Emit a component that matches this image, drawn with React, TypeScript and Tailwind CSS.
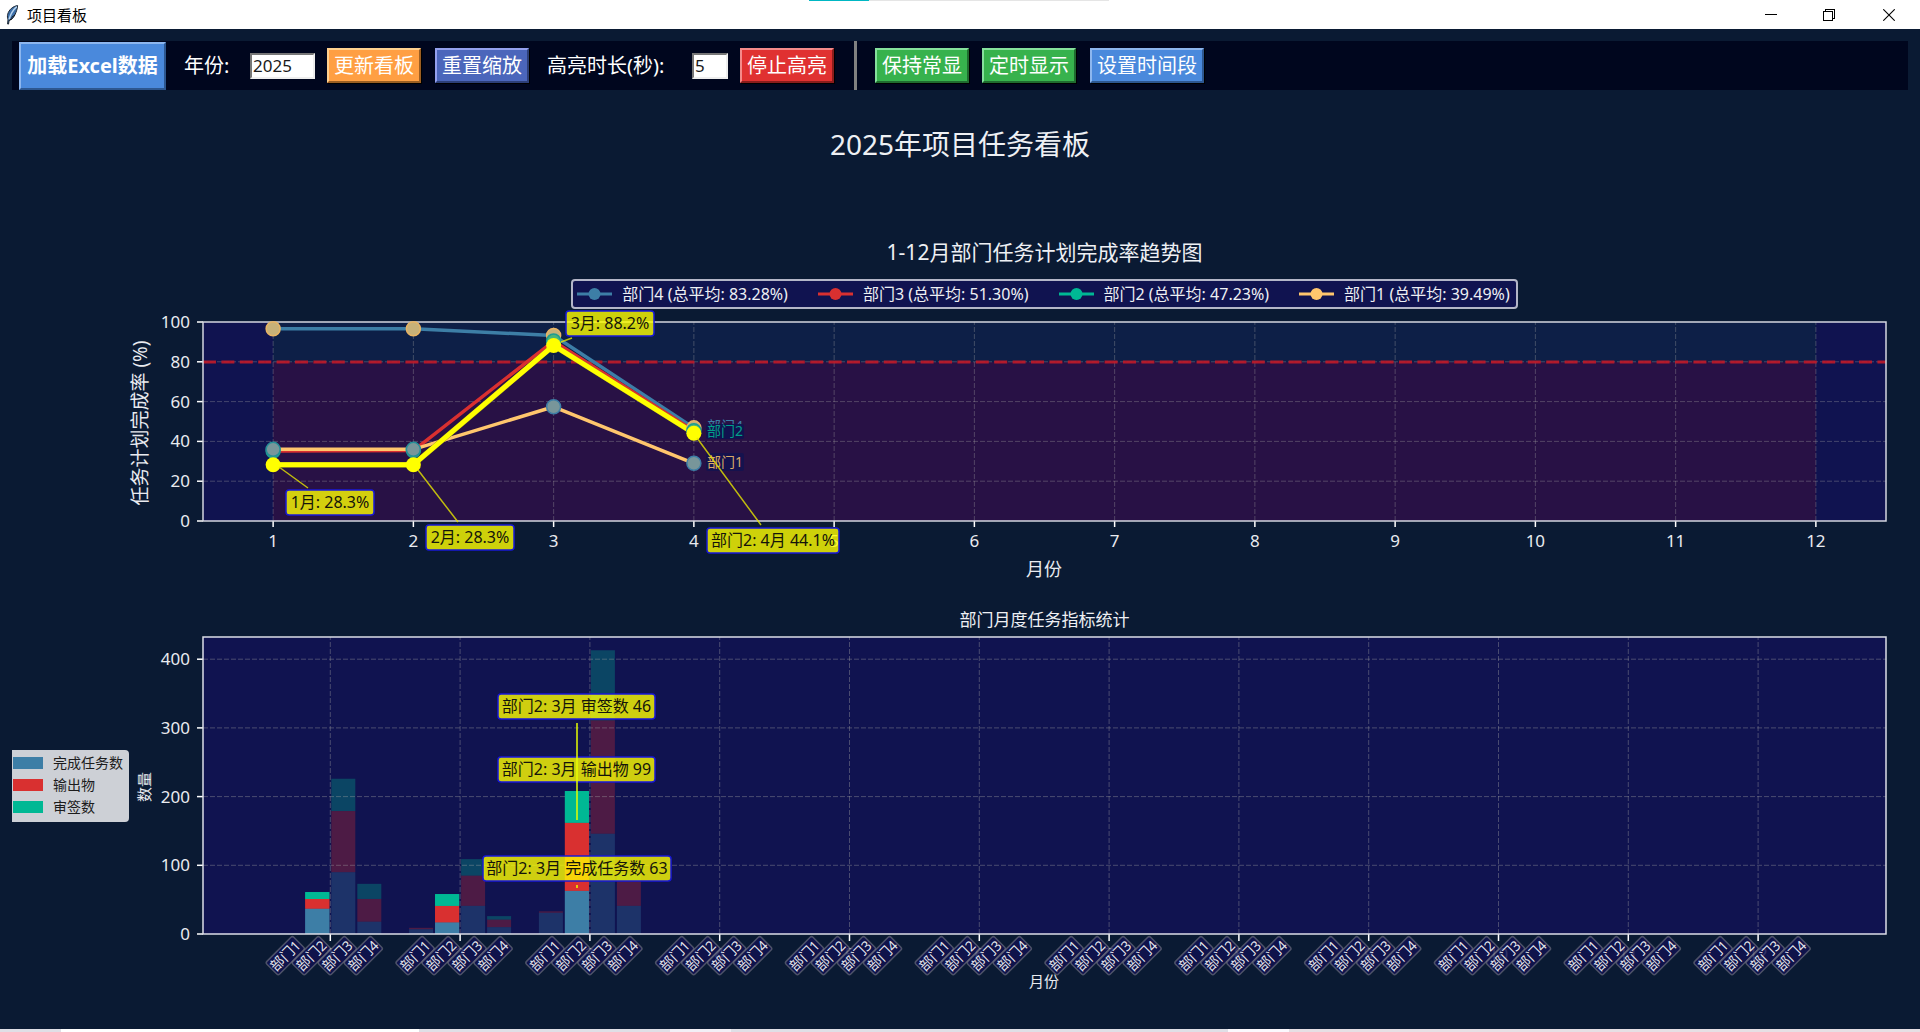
import { useState } from "react";

const PLOT_LEFT = 203;
const PLOT_RIGHT = 1886;
const MONTHS = [1, 2, 3, 4, 5, 6, 7, 8, 9, 10, 11, 12];

const BLUE = "#3d7ea6";
const RED = "#d93030";
const GREEN = "#00b894";
const SAND = "#ffc66d";

/* ---------- window chrome ---------- */

function Feather() {
  return (
    <svg width="14" height="20" viewBox="0 0 14 20" aria-hidden="true">
      <path d="M12.6 0.6C8 1.2 4 4.6 2.7 9.2c-.5 2-.3 4 .3 5.6l-.4 4.2.9.1.6-3.6c2.6-.8 4.6-3 5.8-5.6 1.400-3.100 2.500-6 2.700-9.300z" fill="#3b6ea8" stroke="#1d2733" strokeWidth="1" />
      <path d="M11.8 1.600C8.500 4.500 5.500 9 4 14.500" stroke="#b8d4ee" strokeWidth="1.400" fill="none" />
      <path d="M6.500 12.500l3.500-2.500M4.500 15l3-1.500" stroke="#111" strokeWidth="1" />
    </svg>
  );
}

function TitleBar() {
  return (
    <header className="relative flex h-[29px] items-center bg-white pl-[5px] text-black">
      <div className="absolute left-[809px] top-0 flex h-px w-[300px] bg-[#e5e5e5]">
        <div className="h-px w-[60px] bg-[#00b7c3]" />
      </div>
      <Feather />
      <span className="ml-2 text-[15px] leading-5">项目看板</span>
      <div className="ml-auto flex items-center">
        <button aria-label="最小化" className="flex h-7 w-[58px] items-center justify-center">
          <svg width="12" height="12" viewBox="0 0 12 12" shapeRendering="crispEdges"><path d="M0 5.500h12" stroke="#000" /></svg>
        </button>
        <button aria-label="还原" className="flex h-7 w-[58px] items-center justify-center">
          <svg width="12" height="12" viewBox="0 0 12 12" fill="none" stroke="#000" shapeRendering="crispEdges">
            <path d="M.5 2.500h9v9h-9z" />
            <path d="M2.500 2.500v-2h9v9h-2" />
          </svg>
        </button>
        <button aria-label="关闭" className="flex h-7 w-[62px] items-center justify-center">
          <svg width="12" height="12" viewBox="0 0 12 12" stroke="#000"><path d="M.3.3l11.400 11.400M11.700.3L.3 11.700" strokeWidth="1.100" /></svg>
        </button>
      </div>
    </header>
  );
}

/* ---------- toolbar ---------- */

const raised = "border-2 text-xl text-white leading-none whitespace-nowrap h-[35px] px-[5px] shadow-[1px_1px_0_#000]";

function Toolbar() {
  const [year, setYear] = useState("2025");
  const [secs, setSecs] = useState("5");
  return (
    <div className="mx-3 mt-3 flex h-[49px] items-center bg-[#00061e] pl-[7px] text-xl text-white">
      <button className="h-12 w-[147px] whitespace-nowrap border-2 border-t-[#8db6ee] border-l-[#8db6ee] border-b-[#2d5790] border-r-[#2d5790] bg-[#4a89dc] text-xl font-bold leading-none">
        加载Excel数据
      </button>
      <label htmlFor="year" className="ml-[18px] w-[66px]">年份:</label>
      <input id="year" value={year} onChange={(e) => setYear(e.target.value)} className="h-[26px] w-[65px] border-2 border-t-[#777] border-l-[#777] border-b-[#eee] border-r-[#eee] bg-white pl-px text-[17px] leading-none text-[#1a1a1a]" />
      <button className={raised + " ml-3 border-t-[#ffd08f] border-l-[#ffd08f] border-b-[#9c5e22] border-r-[#9c5e22] bg-[#ff9f43]"}>更新看板</button>
      <button className={raised + " ml-[14px] border-t-[#94a0ee] border-l-[#94a0ee] border-b-[#2d3f78] border-r-[#2d3f78] bg-[#4b66bb]"}>重置缩放</button>
      <label htmlFor="secs" className="ml-[18px] w-[145px]">高亮时长(秒):</label>
      <input id="secs" value={secs} onChange={(e) => setSecs(e.target.value)} className="h-[26px] w-9 border-2 border-t-[#777] border-l-[#777] border-b-[#eee] border-r-[#eee] bg-white pl-px text-[17px] leading-none text-[#1a1a1a]" />
      <button className={raised + " ml-3 border-t-[#f58a8a] border-l-[#f58a8a] border-b-[#8a1c1c] border-r-[#8a1c1c] bg-[#e03131]"}>停止高亮</button>
      <div className="ml-5 h-full w-[3px] bg-[#808080]" />
      <button className={raised + " ml-[18px] border-t-[#85e09c] border-l-[#85e09c] border-b-[#1f6b30] border-r-[#1f6b30] bg-[#37b24d]"}>保持常显</button>
      <button className={raised + " ml-[13px] border-t-[#85e09c] border-l-[#85e09c] border-b-[#1f6b30] border-r-[#1f6b30] bg-[#37b24d]"}>定时显示</button>
      <button className={raised + " ml-[14px] border-t-[#8db6ee] border-l-[#8db6ee] border-b-[#2d5790] border-r-[#2d5790] bg-[#4a89dc]"}>设置时间段</button>
    </div>
  );
}

/* ---------- shared chart pieces ---------- */

function Note({ x, y, w, children }: { x: number; y: number; w: number; children: string }) {
  return (
    <g>
      <rect x={x} y={y} width={w} height={25} rx={3} fill="#ffff00" fillOpacity={0.8} stroke="#1818d8" strokeWidth={1.500} />
      <text x={x + w / 2} y={y + 18} textAnchor="middle" fontSize={16} fill="#14140a">{children}</text>
    </g>
  );
}

/* ---------- completion rate chart ---------- */

const mx = (m: number) => PLOT_LEFT + (m - 0.5) * ((PLOT_RIGHT - PLOT_LEFT) / 12);
const ry = (v: number) => 521 - v * 1.99;
const pts = (vals: number[]) => vals.map((v, i) => `${mx(i + 1)},${ry(v)}`).join(" ");

const RATE = {
  d4: [96.6, 96.6, 93.2, 46.8],
  d3: [35.2, 35.4, 90.4, 45.400],
  d2: [28.3, 28.3, 88.2, 44.1],
  d1: [36, 36, 57.4, 29],
};

const LEGEND = [
  { name: "部门4", avg: "83.28%", color: BLUE },
  { name: "部门3", avg: "51.30%", color: RED },
  { name: "部门2", avg: "47.23%", color: GREEN },
  { name: "部门1", avg: "39.49%", color: SAND },
];

function RateChart() {
  return (
    <svg viewBox="0 312 1920 277" className="mt-[3px] block w-full overflow-visible" role="img" aria-label="部门任务计划完成率趋势图">
      <rect x={PLOT_LEFT} y={322} width={PLOT_RIGHT - PLOT_LEFT} height={199} fill="#101350" />
      <rect x={mx(1)} y={322} width={mx(12) - mx(1)} height={40} fill="#0d1f47" />
      <rect x={mx(1)} y={362} width={mx(12) - mx(1)} height={159} fill="#281145" />
      <g stroke="#a0a0a0" strokeOpacity={0.36} strokeDasharray="5 2">
        {MONTHS.map((m) => <line key={m} x1={mx(m)} x2={mx(m)} y1={521} y2={322} />)}
        {[20, 40, 60, 80].map((v) => <line key={v} x1={PLOT_LEFT} x2={PLOT_RIGHT} y1={ry(v)} y2={ry(v)} />)}
      </g>
      <line x1={PLOT_LEFT} x2={PLOT_RIGHT} y1={362} y2={362} stroke="#c01a28" strokeOpacity={0.9} strokeWidth={3} strokeDasharray="13 5.400" />

      <g stroke="#fff" strokeWidth={1.500}>
        {MONTHS.map((m) => <line key={m} x1={mx(m)} x2={mx(m)} y1={521} y2={527} />)}
        {[0, 20, 40, 60, 80, 100].map((v) => <line key={v} x1={197} x2={PLOT_LEFT} y1={ry(v)} y2={ry(v)} />)}
        <rect x={PLOT_LEFT} y={322} width={PLOT_RIGHT - PLOT_LEFT} height={199} fill="none" stroke="#d4d6e0" />
      </g>
      <g fill="#e9ebf0" fontSize={17}>
        {MONTHS.map((m) => <text key={m} x={mx(m)} y={547} textAnchor="middle">{m}</text>)}
        {[0, 20, 40, 60, 80, 100].map((v) => <text key={v} x={190} y={ry(v) + 6} textAnchor="end">{v}</text>)}
        <text x={1044} y={576} textAnchor="middle" fontSize={18}>月份</text>
        <text transform="translate(147 423) rotate(-90)" textAnchor="middle" fontSize={19}>任务计划完成率 (%)</text>
      </g>

      <g fill="none" strokeWidth={3.500} strokeLinejoin="round">
        <polyline points={pts(RATE.d4)} stroke={BLUE} />
        <polyline points={pts(RATE.d3)} stroke={RED} />
        <polyline points={pts(RATE.d1)} stroke={SAND} />
        <polyline points={pts(RATE.d2)} stroke="#8a8a20" strokeWidth={5.500} />
        <polyline points={pts(RATE.d2)} stroke="#ffff00" strokeWidth={5} />
      </g>
      {RATE.d4.map((v, i) => <circle key={i} cx={mx(i + 1)} cy={ry(v)} r={7} fill="#c8b178" stroke="#e8b464" strokeWidth={1.500} />)}
      {RATE.d3.map((v, i) => <circle key={i} cx={mx(i + 1)} cy={ry(v)} r={7} fill="#4cb47a" stroke="#1c9c90" strokeWidth={1.500} />)}
      {RATE.d1.map((v, i) => <circle key={i} cx={mx(i + 1)} cy={ry(v)} r={7} fill="#78969a" stroke={i < 2 ? "#258e98" : "#3d7ea6"} strokeWidth={1.500} />)}
      {RATE.d2.map((v, i) => <circle key={i} cx={mx(i + 1)} cy={ry(v)} r={7.500} fill="#ffff00" />)}

      <g fontSize={14}>
        <text x={707} y={431} fill={BLUE}>部门4</text>
        <rect x={706} y={424} width={38} height={15} rx={2} fill="#101350" fillOpacity={0.95} />
        <text x={707} y={436} fill={GREEN} fillOpacity={0.85}>部门2</text>
        <rect x={706} y={453} width={38} height={18} rx={2} fill="#101350" fillOpacity={0.8} />
        <text x={707} y={467} fill={SAND} fillOpacity={0.85}>部门1</text>
      </g>

      <g stroke="#e6e600" strokeOpacity={0.8} strokeWidth={1.500}>
        <path d="M279 467L308 488M418 470L458 522M561 342L572 338M697 438L761 525" fill="none" />
      </g>
      <Note x={286} y={490} w={88}>1月: 28.3%</Note>
      <Note x={426} y={525} w={88}>2月: 28.3%</Note>
      <Note x={566} y={311} w={88}>3月: 88.2%</Note>
      <Note x={707} y={528} w={132}>部门2: 4月 44.1%</Note>
    </svg>
  );
}

/* ---------- stacked bar chart ---------- */

const tx = (m: number) => 330.3 + (m - 1) * 129.8;
const cy = (v: number) => 934 - v * 0.687;

/* month -> department -> [finished, outputs, signed] */
const BARS = [
  [[1, 0, 0], [37, 14, 10], [90, 89, 47], [18, 33, 22]],
  [[7, 2, 0], [17, 24, 17], [41, 44, 24], [10, 11, 5]],
  [[31, 2, 0], [63, 99, 46], [146, 165, 102], [41, 37, 10]],
];
const STACK = [BLUE, RED, GREEN];

function CountChart() {
  return (
    <svg viewBox="132 630 1788 365" className="block min-w-0 flex-1 overflow-visible" role="img" aria-label="部门月度任务指标统计">
      <rect x={PLOT_LEFT} y={637} width={PLOT_RIGHT - PLOT_LEFT} height={297} fill="#101350" />
      {BARS.map((depts, m) =>
        depts.map((vals, d) => {
          let base = 0;
          return vals.map((v, s) => {
            base += v;
            return (
              <rect key={`${m}-${d}-${s}`} x={tx(m + 1) - 51 + d * 26} y={cy(base)} width={24} height={v * 0.687} fill={STACK[s]} fillOpacity={d === 1 ? 1 : 0.3} />
            );
          });
        })
      )}
      <g stroke="#a0a0a0" strokeOpacity={0.4} strokeDasharray="5 2">
        {MONTHS.map((m) => <line key={m} x1={tx(m)} x2={tx(m)} y1={934} y2={637} />)}
        {[100, 200, 300, 400].map((v) => <line key={v} x1={PLOT_LEFT} x2={PLOT_RIGHT} y1={cy(v)} y2={cy(v)} />)}
      </g>
      {/* highlighted department stays above the grid */}
      {BARS.map((depts, m) => {
        let base = 0;
        return depts[1].map((v, s) => {
          base += v;
          return <rect key={`${m}-${s}`} x={tx(m + 1) - 25} y={cy(base)} width={24} height={v * 0.687} fill={STACK[s]} />;
        });
      })}
      <g stroke="#fff" strokeWidth={1.500}>
        {MONTHS.map((m) => <line key={m} x1={tx(m)} x2={tx(m)} y1={934} y2={941} />)}
        {[0, 100, 200, 300, 400].map((v) => <line key={v} x1={197} x2={PLOT_LEFT} y1={cy(v)} y2={cy(v)} />)}
        <rect x={PLOT_LEFT} y={637} width={PLOT_RIGHT - PLOT_LEFT} height={297} fill="none" stroke="#dcdee8" />
      </g>
      <g fill="#e9ebf0" fontSize={17}>
        {[0, 100, 200, 300, 400].map((v) => <text key={v} x={190} y={cy(v) + 6} textAnchor="end">{v}</text>)}
        {MONTHS.map((m) => <text key={m} x={tx(m)} y={960} textAnchor="middle">{m}</text>)}
        <text x={1044} y={987} textAnchor="middle" fontSize={15}>月份</text>
        <text transform="translate(150 787) rotate(-90)" textAnchor="middle" fontSize={15}>数量</text>
      </g>
      {MONTHS.map((m) =>
        [1, 2, 3, 4].map((d) => (
          <g key={`${m}-${d}`} transform={`translate(${tx(m) - 71 + d * 26} 955.700) rotate(-45)`} fillOpacity={0.85}>
            <rect x={-19} y={-9} width={38} height={18} rx={2} fill="#101350" stroke="#84848c" strokeOpacity={0.55} strokeWidth={1.500} />
            <text y={5} textAnchor="middle" fontSize={14} fill="#fff" fillOpacity={0.9}>{`部门${d}`}</text>
          </g>
        ))
      )}
      <Note x={498} y={694} w={157}>部门2: 3月 审签数 46</Note>
      <Note x={498} y={757} w={157}>部门2: 3月 输出物 99</Note>
      <Note x={483} y={856} w={188}>部门2: 3月 完成任务数 63</Note>
      <path d="M577 723V820M577 885V888" stroke="#e6ff00" strokeOpacity={0.75} strokeWidth={2} fill="none" />
    </svg>
  );
}

export default function App() {
  return (
    <div className="flex min-h-screen flex-col bg-[#0a1a33] font-['Noto_Sans','Noto_Sans_CJK_SC',sans-serif] text-[#eef0f4]">
      <TitleBar />
      <main className="flex-1">
        <Toolbar />
        <h1 className="mt-[34px] text-center text-[28px] leading-10">2025年项目任务看板</h1>

        <section className="mt-[73px]">
          <div className="flex flex-col items-center pl-[169px]">
            <h2 className="text-[21px] leading-[30px]">1-12月部门任务计划完成率趋势图</h2>
            <ul className="mt-3 flex h-[30px] items-center gap-[30px] rounded border-2 border-[#b4b6c8] bg-[#101350] pl-1 pr-[6px]">
              {LEGEND.map((l) => (
                <li key={l.name} className="flex items-center gap-[10px] whitespace-nowrap text-base leading-6">
                  <svg width="35" height="12" viewBox="0 0 35 12" aria-hidden="true">
                    <path d="M0 6h35" stroke={l.color} strokeWidth="3" />
                    <circle cx="17.500" cy="6" r="6" fill={l.color} />
                  </svg>
                  <span>{l.name} (总平均: {l.avg})</span>
                </li>
              ))}
            </ul>
          </div>
          <RateChart />
        </section>

        <section className="mt-5">
          <h2 className="pl-[169px] text-center text-[17px] leading-[21px]">部门月度任务指标统计</h2>
          <div className="flex items-center">
            <ul className="mb-[54px] ml-3 mr-[3px] flex h-[72px] w-[117px] flex-col justify-between rounded-r bg-[#cdd0d6] pb-[5px] pt-[3px] pl-px text-sm leading-5 text-[#1c1c1c]">
              {["完成任务数", "输出物", "审签数"].map((t, i) => (
                <li key={t} className="flex items-center gap-[10px] whitespace-nowrap">
                  <svg width="30" height="12" aria-hidden="true"><rect width="30" height="12" fill={STACK[i]} /></svg>
                  {t}
                </li>
              ))}
            </ul>
            <CountChart />
          </div>
        </section>
      </main>
      <footer className="flex h-[3px] bg-[#dfdfe6]">
        <div className="ml-[61px] w-[358px] bg-white" />
        <div className="ml-[251px] w-[61px] bg-[#f2eff6]" />
        <div className="ml-[497px] w-[61px] bg-[#fbf8fd]" />
        <div className="flex-1 bg-[#e6dfe4]" />
      </footer>
    </div>
  );
}
